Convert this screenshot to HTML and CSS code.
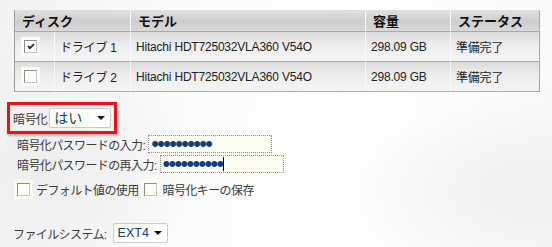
FILE: index.html
```html
<!DOCTYPE html>
<html lang="ja">
<head>
  <meta charset="UTF-8">
  <title>ディスク設定</title>
  <link rel="stylesheet" href="styles.css">
</head>
<body>

  <!-- ディスク一覧 -->
  <table class="disks">
    <colgroup>
      <col class="c-pick">
      <col class="c-name">
      <col class="c-model">
      <col class="c-size">
      <col class="c-status">
    </colgroup>
    <thead>
      <tr>
        <th colspan="2">ディスク</th>
        <th>モデル</th>
        <th>容量</th>
        <th>ステータス</th>
      </tr>
    </thead>
    <tbody>
      <tr>
        <td class="pick"><span class="cb-wrap"><span class="cb checked"><svg width="8" height="7" viewBox="0 0 8 7"><path d="M1 3 L3 5.2 L7 1" fill="none" stroke="#222" stroke-width="1.8"/></svg></span></span></td>
        <td>ドライブ 1</td>
        <td>Hitachi HDT725032VLA360 V54O</td>
        <td>298.09 GB</td>
        <td>準備完了</td>
      </tr>
      <tr>
        <td class="pick"><span class="cb-wrap"><span class="cb"></span></span></td>
        <td>ドライブ 2</td>
        <td>Hitachi HDT725032VLA360 V54O</td>
        <td>298.09 GB</td>
        <td>準備完了</td>
      </tr>
    </tbody>
  </table>

  <!-- 暗号化 -->
  <div class="encrypt-box">
    <label class="lbl">暗号化</label>
    <span class="select-wrap">
      <select class="select wide">
        <option>はい</option>
        <option>いいえ</option>
      </select>
    </span>
  </div>

  <div class="password-block">
    <div class="field-row">
      <label class="lbl">暗号化パスワードの入力:</label>
      <input class="pw" type="password" value="**********">
    </div>
    <div class="field-row">
      <label class="lbl">暗号化パスワードの再入力:</label>
      <span class="pw-wrap">
        <input class="pw" type="password" value="**********">
        <span class="caret"></span>
      </span>
    </div>
    <div class="option-row">
      <span class="cb-wrap"><span class="cb"></span></span>
      <span class="lbl">デフォルト値の使用</span>
      <span class="cb-wrap"><span class="cb"></span></span>
      <span class="lbl">暗号化キーの保存</span>
    </div>
  </div>

  <!-- ファイルシステム -->
  <div class="fs-row">
    <label class="lbl">ファイルシステム:</label>
    <span class="select-wrap">
      <select class="select narrow">
        <option>EXT4</option>
        <option>XFS</option>
      </select>
    </span>
  </div>

</body>
</html>
```

FILE: styles.css
```css
body {
  margin: 0;
  width: 552px;
  height: 247px;
  overflow: hidden;
  font-family: "Liberation Sans", "Noto Sans CJK JP", sans-serif;
  font-size: 12px;
  color: #222;
  background:
    radial-gradient(ellipse 160px 120px at 40px 170px, #eeeeee, rgba(255,255,255,0) 100%),
    radial-gradient(ellipse 200px 90px at 540px 190px, #f0f0f0, rgba(255,255,255,0) 100%),
    linear-gradient(100deg, #f3f3f3 0%, #fbfbfb 35%, #fff 60%, #f8f8f8 100%);
}

.lbl {
  color: #3c3c3c;
  letter-spacing: -0.6px;
}

/* テーブル */
.disks {
  margin: 10px 0 0 14px;
  width: 525px;
  table-layout: fixed;
  border-collapse: separate;
  border-spacing: 0;
  border-right: 1px solid #a6a6a6;
}

.c-pick { width: 40px; }
.c-name { width: 76px; }
.c-model { width: 235px; }
.c-size { width: 85px; }
.c-status { width: 89px; }

.disks th,
.disks td {
  text-align: left;
  padding: 0 0 0 7px;
  border-left: 1px solid #fafafa;
  border-bottom: 1px solid #a9a9a9;
  white-space: nowrap;
}

.disks th:first-child,
.disks td.pick {
  border-left: 1px solid #9e9e9e;
}

.disks th {
  height: 21px;
  font-size: 13px;
  font-weight: bold;
  color: #111;
  background: linear-gradient(#e0e0e0, #cecece 55%, #d8d8d8);
}

.disks td {
  height: 29px;
  padding-left: 5px;
  letter-spacing: -0.2px;
  background: linear-gradient(#dbdbdb, #ededed 45%, #f5f5f5);
}

.disks td.pick {
  padding: 0 0 0 6px;
}

/* チェックボックス */
.cb-wrap {
  display: inline-flex;
  align-items: center;
  justify-content: center;
  width: 19px;
  height: 19px;
  background: #fbfbee;
}

.cb {
  display: inline-flex;
  align-items: center;
  justify-content: center;
  width: 11px;
  height: 11px;
  background: #fff;
  border: 1px solid #8c8c8c;
  border-right-color: #c4c4c4;
  border-bottom-color: #c4c4c4;
}

/* 暗号化 */
.encrypt-box {
  display: inline-flex;
  align-items: center;
  gap: 2px;
  margin: 10px 0 0 7px;
  padding: 3px;
  border: 3px solid #ee1111;
  box-shadow: 1px 2px 2px rgba(0,0,0,0.25);
}

.select-wrap {
  position: relative;
  display: inline-block;
}

.select-wrap::after {
  content: "";
  position: absolute;
  right: 6px;
  top: 8px;
  border-left: 4px solid transparent;
  border-right: 4px solid transparent;
  border-top: 4px solid #111;
  pointer-events: none;
}

.select {
  appearance: none;
  -webkit-appearance: none;
  height: 20px;
  margin: 0;
  padding: 0 0 0 4px;
  border: 1px solid #c8ccd6;
  border-radius: 2px;
  color: #0d3f7d;
  font-family: "Liberation Sans", "Noto Sans CJK JP", sans-serif;
}

.select.wide {
  width: 62px;
  font-size: 14px;
  background: linear-gradient(to right, #fdfdf1 0, #fdfdf1 40px, #fff 40px);
}

.select.narrow {
  width: 55px;
  font-size: 12.5px;
  background: linear-gradient(to right, #fdfdf1 0, #fdfdf1 36px, #fff 36px);
}

/* パスワード */
.password-block {
  padding: 1px 0 0 17px;
}

.field-row {
  display: flex;
  align-items: center;
  gap: 3px;
  margin-bottom: 2px;
}

.pw {
  width: 124px;
  height: 18px;
  box-sizing: border-box;
  margin: 0;
  padding: 0 0 0 2px;
  border: 1px dotted #8f8f8f;
  background: #fcfcf0;
  color: #0d3f7d;
  font-family: "Liberation Sans", sans-serif;
  font-size: 22px;
  line-height: 16px;
  letter-spacing: -1.7px;
}

.pw-wrap {
  position: relative;
  display: inline-block;
  height: 18px;
}

.caret {
  position: absolute;
  left: 63px;
  top: 2px;
  width: 1px;
  height: 14px;
  background: #000;
}

.option-row {
  display: flex;
  align-items: center;
  gap: 3px;
  margin: 7px 0 0 -3px;
}

.option-row .lbl + .cb-wrap {
  margin-left: -1px;
}

/* ファイルシステム */
.fs-row {
  display: flex;
  align-items: center;
  gap: 6px;
  margin: 24px 0 0 13px;
}
```
